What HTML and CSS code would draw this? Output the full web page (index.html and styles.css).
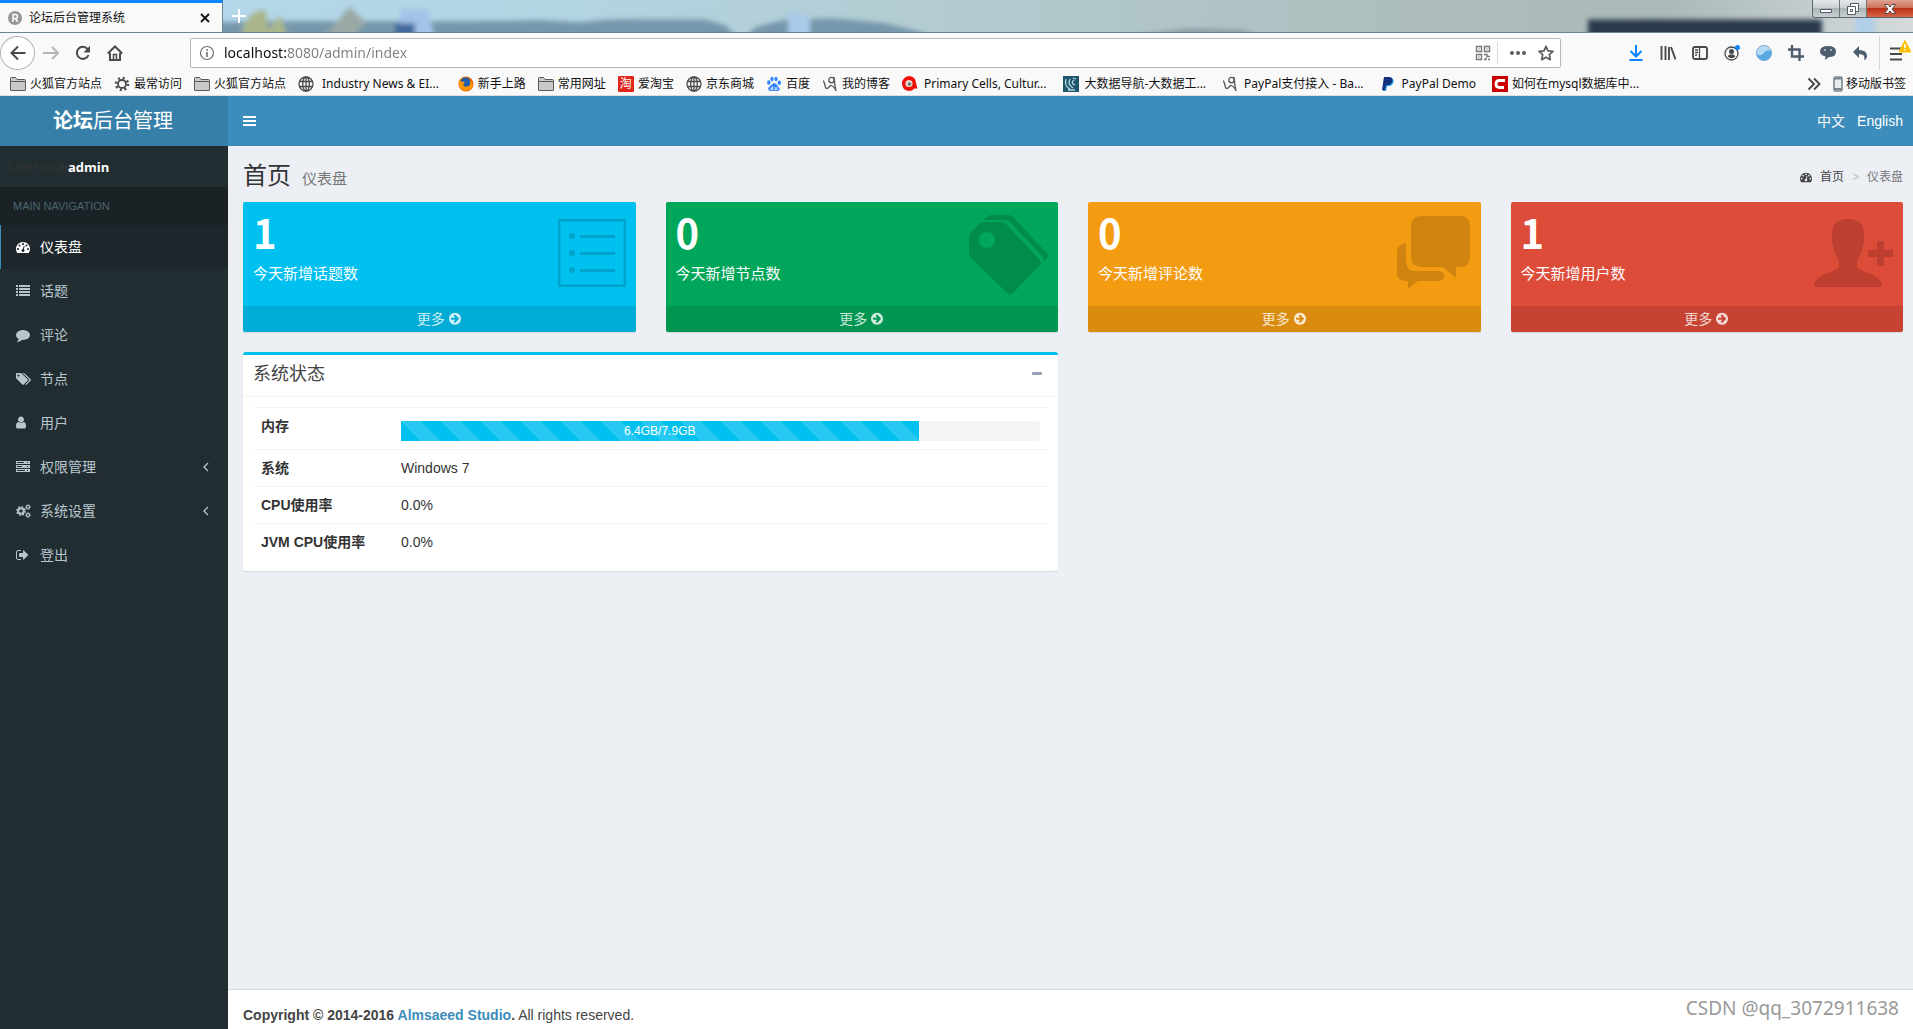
FILE: index.html
```html
<!DOCTYPE html>
<html lang="zh-CN">
<head>
<meta charset="utf-8">
<title>论坛后台管理系统</title>
<link rel="stylesheet" href="styles.css">
</head>
<body>
<svg class="sprite" aria-hidden="true">
  <symbol id="dashboard" viewBox="0 0 1792 1792"><path d="M384 1152q0-53-37.5-90.5t-90.5-37.5-90.5 37.5-37.5 90.5 37.5 90.5 90.5 37.5 90.5-37.5 37.5-90.5zm192-448q0-53-37.5-90.5t-90.5-37.5-90.5 37.5-37.5 90.5 37.5 90.5 90.5 37.5 90.5-37.5 37.5-90.5zm428 481l101-382q6-26-7.5-48.5t-38.5-29.5-48 6.5-30 39.5l-101 382q-60 5-107 43.5t-63 98.5q-20 77 20 146t117 89 146-20 89-117q16-60-6-117t-72-91zm660-33q0-53-37.5-90.5t-90.5-37.5-90.5 37.5-37.5 90.5 37.5 90.5 90.5 37.5 90.5-37.5 37.5-90.5zm-640-640q0-53-37.5-90.5t-90.5-37.5-90.5 37.5-37.5 90.5 37.5 90.5 90.5 37.5 90.5-37.5 37.5-90.5zm448 192q0-53-37.5-90.5t-90.5-37.5-90.5 37.5-37.5 90.5 37.5 90.5 90.5 37.5 90.5-37.5 37.5-90.5zm320 448q0 261-141 483-19 29-54 29h-1402q-35 0-54-29-141-221-141-483 0-182 71-348t191-286 286-191 348-71 348 71 286 191 191 286 71 348z"/></symbol>
  <symbol id="more" viewBox="0 0 1792 1792"><path d="M1413 896q0-27-18-45l-91-91-362-362q-18-18-45-18t-45 18l-91 91q-18 18-18 45t18 45l189 189h-502q-26 0-45 19t-19 45v128q0 26 19 45t45 19h502l-189 189q-19 19-19 45t19 45l91 91q18 18 45 18t45-18l362-362 91-91q18-18 18-45zm251 0q0 209-103 385.5t-279.5 279.5-385.5 103-385.5-103-279.5-279.5-103-385.5 103-385.5 279.5-279.5 385.5-103 385.5 103 279.5 279.5 103 385.5z" transform="translate(0 -34)" fill-rule="evenodd"/></symbol>
  <symbol id="folder" viewBox="0 0 16 16"><path d="M.5 14V2.500q0-1 1-1h4l1.500 2h7.500q1 0 1 1V14q0 .5-.5.5H1q-.5 0-.5-.5z" fill="#c9c9cb" stroke="#5a5a5c"/><path d="M1 5.500h14" stroke="#5a5a5c"/></symbol>
  <symbol id="globe" viewBox="0 0 16 16"><g fill="none" stroke="#4a4a4c" stroke-width="1.300"><circle cx="8" cy="8" r="7"/><ellipse cx="8" cy="8" rx="3.300" ry="7"/><path d="M1.500 5.500h13M1.500 10.500h13M8 1v14"/></g></symbol>
  <symbol id="blog" viewBox="0 0 16 16"><g fill="none" stroke="#555" stroke-width="1.300"><path d="M1 5q1 0 2 4.500t3 2.500 3-3"/><circle cx="9.500" cy="4" r="2.700"/><path d="M12 1q.5 7 2 14-1-4-5-5.500"/></g></symbol>
  <symbol id="angle" viewBox="0 0 8 12"><path d="M6 2L2 6l4 4" fill="none" stroke="currentColor" stroke-width="1.300"/></symbol>
</svg>

<header class="browser">
  <div class="titlebar">
    <svg class="wallpaper" viewBox="0 0 1913 33" preserveAspectRatio="none" aria-hidden="true">
      <defs>
        <linearGradient id="sky" x2="1"><stop offset="0" stop-color="#b4d8ef"/><stop offset=".3" stop-color="#b3d4e2"/><stop offset=".5" stop-color="#b3cbd0"/><stop offset=".7" stop-color="#aebfbf"/><stop offset=".87" stop-color="#abb9b8"/><stop offset="1" stop-color="#d4dadd"/></linearGradient>
        <filter id="soft" x="-10%" y="-100%" width="120%" height="300%"><feGaussianBlur stdDeviation="2.500"/></filter>
      </defs>
      <path fill="url(#sky)" d="M0 0h1913v33H0z"/>
      <g filter="url(#soft)">
        <path fill="#7696ab" d="M180 24l80-2h200l80-1 40 2 30-3 50 0h45l20 6 15 14H180zM745 40l10-12 30-8 50-1 50 5 40 10v6z"/>
        <path fill="#8298a2" d="M1130 36l60-6 50 1 20 5z"/>
        <path fill="#a9b68c" d="M242 30q10-22 24-19l2 19 12-14 9 24h-47z"/>
        <path fill="#9aa9a5" d="M324 38l26-31 15 16-12 15z"/>
        <path fill="#a5c3e8" d="M400 9h27l8 30h-36z"/><path fill="#42699f" d="M395 24h20v14h-20z"/>
        <path fill="#a9cae9" d="M788 12l22 5v24h-22z"/>
        <path fill="#2b3a4e" d="M1588 20h234v24h-234z"/>
        <path fill="#b2cfe8" d="M1855 10h20v33h-20z"/>
      </g>
    </svg>
    <div class="tab">
      <svg class="i16" viewBox="0 0 16 16" aria-hidden="true"><circle cx="8" cy="8" r="7" fill="#969696"/><path d="M6 12V4.500h2.500q2 0 2 2t-2 2H6m2.500 0l2.300 3.500" fill="none" stroke="#fff" stroke-width="1.500"/></svg>
      <span class="tab-title">论坛后台管理系统</span>
      <button class="plain" aria-label="关闭标签页"><svg class="i12" viewBox="0 0 12 12"><path d="M2 2l8 8M10 2l-8 8" stroke="#111" stroke-width="1.800"/></svg></button>
    </div>
    <button class="plain new-tab" aria-label="新标签页"><svg class="i16" viewBox="0 0 16 16"><path d="M8 1v14M1 8h14" stroke="#fff" stroke-width="2"/></svg></button>
    <div class="win-buttons">
      <button aria-label="最小化"><svg width="14" height="12" viewBox="0 0 14 12"><path d="M1.500 6.500h11v3h-11z" fill="#fff" stroke="#555a6b"/></svg></button>
      <button aria-label="还原"><svg width="14" height="14" viewBox="0 0 14 14"><g fill="#fff" stroke="#555a6b"><path d="M4.500 1.500h8v8h-8z"/><path d="M1.500 4.500h8v8h-8z"/><path d="M4.500 7.500h2v2h-2z"/></g></svg></button>
      <button class="close" aria-label="关闭"><svg width="14" height="12" viewBox="0 0 14 12"><path d="M1.500 1.500h3.500l2 2.500 2-2.500h3.500L9 6l3.500 4.500H9L7 8l-2 2.500H1.500L5 6z" fill="#fff" stroke="#5e4a54"/></svg></button>
    </div>
  </div>

  <div class="toolbar">
    <button class="back" aria-label="后退"><svg class="i16" viewBox="0 0 16 16"><path d="M15.500 8H1.500M8 1.500L1.500 8 8 14.500" fill="none" stroke="#4a4a4c" stroke-width="2"/></svg></button>
    <button class="plain tool" aria-label="前进"><svg class="i16" viewBox="0 0 16 16"><path d="M0 8h15M9 2l6 6-6 6" fill="none" stroke="#b5b5b7" stroke-width="2"/></svg></button>
    <button class="plain tool" aria-label="刷新"><svg class="i16" viewBox="0 0 16 16"><path d="M13.500 10A6 6 0 1 1 12.500 4" fill="none" stroke="#4a4a4c" stroke-width="2"/><path d="M15 .8v6.700H8.500z" fill="#4a4a4c"/></svg></button>
    <button class="plain tool" aria-label="主页"><svg class="i16" viewBox="0 0 16 16"><path d="M.8 8.500L8 1.500l7.200 7M3 8v7h10V8" fill="none" stroke="#4a4a4c" stroke-width="2"/><path d="M6.500 14V9.500h3V14" fill="none" stroke="#4a4a4c" stroke-width="1.500"/></svg></button>
    <div class="urlbar">
      <svg class="i16" viewBox="0 0 16 16" aria-hidden="true"><circle cx="8" cy="8" r="6.500" fill="none" stroke="#6d6d70" stroke-width="1.200"/><path d="M8 7v5M8 4v1.800" stroke="#6d6d70" stroke-width="1.600"/></svg>
      <input class="address" type="text" aria-label="地址" value="localhost:8080/admin/index">
      <svg class="i16" viewBox="0 0 16 16" aria-hidden="true"><g fill="none" stroke="#77777a" stroke-width="1.400"><path d="M1.500 1.500h5v5h-5zM9.500 1.500h5v5h-5zM1.500 9.500h5v5h-5z"/><path d="M9 9.500h3v2h3M9 14.500h2v-2M13 14.500h2M3.500 4h1M11.500 4h1M3.500 12h1"/></g></svg>
      <i class="rule"></i>
      <svg class="i16" viewBox="0 0 16 16" aria-hidden="true"><g fill="#5a5a5c"><circle cx="2" cy="8" r="2"/><circle cx="8" cy="8" r="2"/><circle cx="14" cy="8" r="2"/></g></svg>
      <svg class="i16 star" viewBox="0 0 16 16" aria-hidden="true"><path d="M8 1.300l2 4.500 5 .5-3.700 3.400 1 5L8 12.200l-4.300 2.500 1-5L1 6.300l5-.5z" fill="none" stroke="#5a5a5c" stroke-width="1.700" stroke-linejoin="round"/></svg>
    </div>
    <div class="tools">
      <button class="plain tool" aria-label="下载"><svg class="i16" viewBox="0 0 16 16"><path d="M8 0v11M2.500 6L8 11.500 13.500 6M1.500 15h13" fill="none" stroke="#0a84ff" stroke-width="2"/></svg></button>
      <button class="plain tool" aria-label="书签库"><svg class="i16" viewBox="0 0 16 16"><path d="M1.500 1v14M5.500 1v14M9 2v13M11 2l4.500 12.500" stroke="#4a4a4c" stroke-width="1.900"/></svg></button>
      <button class="plain tool" aria-label="侧栏"><svg class="i16" viewBox="0 0 16 16"><rect x="1" y="2" width="14" height="12" rx="2" fill="none" stroke="#4a4a4c" stroke-width="1.900"/><path d="M7.500 2v12M3 5h3M3 7.500h3M3 10h2" stroke="#4a4a4c" stroke-width="1.300"/></svg></button>
      <button class="plain tool" aria-label="账户"><svg class="i16" viewBox="0 0 16 16"><circle cx="7.500" cy="8.500" r="6.500" fill="none" stroke="#4a4a4c" stroke-width="1.300"/><circle cx="7.500" cy="6.500" r="2.500" fill="#4a4a4c"/><path d="M3.500 11.500q1-2.200 4-2.200t4 2.200q-4 3.500-8 0z" fill="#4a4a4c"/><circle cx="13.500" cy="2.500" r="2.500" fill="#0a84ff"/></svg></button>
      <button class="plain tool" aria-label="扩展"><svg class="i16" viewBox="0 0 16 16"><circle cx="8" cy="8" r="7.600" fill="#b4daf5" stroke="#6c9ccc" stroke-width=".8"/><path d="M.8 9q4 3 7-1t7-2q2 8-6 9.500Q2 15 .8 9z" fill="#5aa8e0"/></svg></button>
      <button class="plain tool" aria-label="截图"><svg class="i16" viewBox="0 0 16 16"><path d="M4 0v11.500h12M0 4.500h11.500V16" fill="none" stroke="#4f5e6c" stroke-width="2.400"/></svg></button>
      <button class="plain tool" aria-label="聊天"><svg class="i16" viewBox="0 0 16 16"><path d="M8 1q8 0 8 5.500T9 12l-4 3 .5-3.500Q0 10 0 6.500 0 1 8 1z" fill="#4f5e6c"/><circle cx="5" cy="5" r="1.100" fill="#b9c2ca"/><circle cx="11" cy="5" r="1.100" fill="#b9c2ca"/></svg></button>
      <button class="plain tool" aria-label="撤销"><svg class="i16" viewBox="0 0 16 16"><path d="M7 1v4q8 0 8 6 0 3-3 4 2-6-5-6v4L1 7z" fill="#4f5e6c"/></svg></button>
      <i class="rule tall"></i>
      <button class="plain menu" aria-label="菜单"><svg width="26" height="28" viewBox="0 0 26 28"><path d="M5 9.500h12M5 15h12M5 20.500h12" stroke="#4a4a4c" stroke-width="2.200"/><path d="M20 1.500L26 13H14z" fill="#ffbf00" stroke="#ffbf00" stroke-linejoin="round"/><path d="M20 5v4M20 10v1.500" stroke="#fff" stroke-width="1.600"/></svg></button>
    </div>
  </div>

  <nav class="bookmarks" aria-label="书签">
    <a href="#"><svg class="i16"><use href="#folder"/></svg>火狐官方站点</a>
    <a href="#"><svg class="i16" viewBox="0 0 16 16"><circle cx="8" cy="8" r="4" fill="none" stroke="#4a4a4c" stroke-width="1.800"/><circle cx="8" cy="8" r="6" fill="none" stroke="#4a4a4c" stroke-width="2.500" stroke-dasharray="2 2.710"/></svg>最常访问</a>
    <a href="#"><svg class="i16"><use href="#folder"/></svg>火狐官方站点</a>
    <a href="#" class="page wide"><svg class="i16"><use href="#globe"/></svg>Industry News &amp; EI...</a>
    <a href="#"><svg class="i16" viewBox="0 0 16 16"><circle cx="8" cy="8" r="7.500" fill="#e66000"/><circle cx="7.500" cy="6.500" r="5" fill="#1f5fae"/><path d="M1 4l2 1.500 4 .5-2 3q2 3 6 1 2-2 1-6 5 5 1 9-6 4-11-1-2-4-1-8z" fill="#ff9500"/></svg>新手上路</a>
    <a href="#"><svg class="i16"><use href="#folder"/></svg>常用网址</a>
    <a href="#"><span class="badge">淘</span>爱淘宝</a>
    <a href="#"><svg class="i16"><use href="#globe"/></svg>京东商城</a>
    <a href="#"><svg class="i16" viewBox="0 0 16 16"><g fill="#3385ff"><ellipse cx="2.800" cy="6.500" rx="1.700" ry="2.200"/><ellipse cx="6" cy="3" rx="1.600" ry="2.300"/><ellipse cx="10" cy="3" rx="1.600" ry="2.300"/><ellipse cx="13.300" cy="6.800" rx="1.700" ry="2.200"/><path d="M8 7q2 0 3.500 2.500T14 13q-1 2.500-3.500 2t-5 0Q3 15.500 2 13q0-1.500 2.500-3.500T8 7z"/></g><path d="M6.500 10.500v3H5v-1.500h1.500M9 11v2.500h2V11" fill="none" stroke="#fff" stroke-width=".8"/></svg>百度</a>
    <a href="#"><svg class="i16"><use href="#blog"/></svg>我的博客</a>
    <a href="#" class="page"><svg class="i16" viewBox="0 0 16 16"><path d="M7.500 0Q14 1 14 7l1.500 5.500-3 0Q10 15 7 15 0 14 0 7.500T7.500 0z" fill="#f0100a"/><circle cx="7" cy="7.500" r="3.600" fill="#ecd9d4"/><circle cx="7.500" cy="8" r="1.800" fill="#5c7d74"/></svg>Primary Cells, Cultur...</a>
    <a href="#" class="page"><svg class="i16" viewBox="0 0 16 16"><path d="M0 0h16v16H0z" fill="#20576f"/><path d="M3 3q-2 7 4 10M7 3q-3 5 3 9M11 4q-4 3 1 5M5 14h7M10 2l3 1" stroke="#b5d5de" stroke-width="1.300" fill="none"/></svg>大数据导航-大数据工...</a>
    <a href="#" class="page"><svg class="i16"><use href="#blog"/></svg>PayPal支付接入 - Ba...</a>
    <a href="#" class="page"><svg class="i16" viewBox="0 0 16 16"><path d="M4 2h6q4 0 3.500 4-1 4-5 4H7l-1 5H3z" fill="#1a9ce0"/><path d="M4 1h5q4 0 3.500 4-1 4-5 4H6l-1 5H2z" fill="#12307c"/></svg>PayPal Demo</a>
    <a href="#"><svg class="i16" viewBox="0 0 16 16"><path d="M0 0h16v16H0z" fill="#c00"/><path d="M13 4.500H7.500Q4 4.500 4 8t3.500 3.500H12" fill="none" stroke="#fff" stroke-width="2.800"/></svg>如何在mysql数据库中...</a>
    <span class="spring"></span>
    <button class="plain" aria-label="更多书签"><svg width="14" height="14" viewBox="0 0 14 14"><path d="M1.500 1.500L7 7l-5.500 5.500M7 1.500L12.500 7 7 12.500" fill="none" stroke="#4a4a4c" stroke-width="1.900"/></svg></button>
    <a href="#" class="mobile"><svg width="10" height="16" viewBox="0 0 10 16"><rect x="1" y="1" width="8" height="14" rx="1.500" fill="#e8ecee" stroke="#7d868c" stroke-width="1.600"/><path d="M1 2.500h8M1 13h8" stroke="#7d868c" stroke-width="2"/></svg>移动版书签</a>
  </nav>
</header>

<div class="app">
  <aside class="sidebar">
    <a href="#" class="logo"><b>论坛</b>后台管理</a>
    <div class="user"><span class="photo">User Imag</span><strong>admin</strong></div>
    <div class="nav-title">MAIN NAVIGATION</div>
    <nav>
      <a href="#" class="active"><svg class="i14"><use href="#dashboard"/></svg><span>仪表盘</span></a>
      <a href="#"><svg class="i14" viewBox="0 0 14 14"><path d="M0 1h2v2H0zM3 1h11v2H3zM0 4h2v2H0zM3 4h11v2H3zM0 7h2v2H0zM3 7h11v2H3zM0 10h2v2H0zM3 10h11v2H3z"/></svg><span>话题</span></a>
      <a href="#"><svg class="i14" viewBox="0 0 1792 1792"><path d="M1792 896q0 174-120 321.500t-326 233-450 85.500q-70 0-145-8-198 175-460 242-49 14-114 22h-5q-15 0-27-10.500t-16-27.500v-1q-3-4-.5-12t2-10 4.500-9.500l6-9 7-8.500 8-9q7-8 31-34.500t34.500-38 31-39.500 32.500-51 27-59 26-76q-157-89-247.500-220t-90.500-281q0-174 120-321.500t326-233 450-85.500 450 85.500 326 233 120 321.500z"/></svg><span>评论</span></a>
      <a href="#"><svg width="15" height="14" viewBox="0 0 1920 1792"><path d="M448 448q0-53-37.500-90.500t-90.500-37.500-90.500 37.500-37.500 90.500 37.500 90.500 90.500 37.500 90.500-37.500 37.500-90.500zm1067 576q0 53-37 90l-491 492q-39 37-91 37-53 0-90-37l-715-716q-38-37-64.500-101t-26.500-117v-416q0-52 38-90t90-38h416q53 0 117 26.500t102 64.500l715 714q37 39 37 91zm384 0q0 53-37 90l-491 492q-39 37-91 37-36 0-59-14t-53-45l470-470q37-37 37-90 0-52-37-91l-715-714q-38-38-102-64.500t-117-26.500h224q53 0 117 26.500t102 64.500l715 714q37 39 37 91z"/></svg><span>节点</span></a>
      <a href="#"><svg class="i14" viewBox="256 64 1792 1792"><path d="M1536 1399q0 109-62.500 187t-150.500 78h-854q-88 0-150.500-78t-62.500-187q0-85 8.500-160.500t31.500-152 58.500-131 94-89 134.500-34.500q131 128 313 128t313-128q76 0 134.500 34.500t94 89 58.500 131 31.500 152 8.500 160.500zm-256-887q0 159-112.500 271.500t-271.500 112.500-271.500-112.500-112.500-271.500 112.500-271.500 271.500-112.500 271.500 112.500 112.500 271.500z"/></svg><span>用户</span></a>
      <a href="#"><svg class="i14" viewBox="0 0 14 14"><path fill-rule="evenodd" d="M0 1h14v3H0zM1 2v1h7V2zM11 2v1h1V2zM0 5h14v3H0zM1 6v1h5V6zM11 6v1h1V6zM0 9h14v3H0zM1 10v1h8v-1zM11 10v1h1v-1z"/></svg><span>权限管理</span><svg class="arrow"><use href="#angle"/></svg></a>
      <a href="#"><svg width="15" height="14" viewBox="0 0 15 14"><g fill="none" stroke="currentColor"><circle cx="5" cy="7" r="2.800" stroke-width="2"/><circle cx="5" cy="7" r="4.200" stroke-width="1.500" stroke-dasharray="1.700 1.600"/><circle cx="12" cy="3" r="1.500" stroke-width="1.200"/><circle cx="12" cy="3" r="2.400" stroke-dasharray="1 .9"/><circle cx="12" cy="11" r="1.500" stroke-width="1.200"/><circle cx="12" cy="11" r="2.400" stroke-dasharray="1 .9"/></g></svg><span>系统设置</span><svg class="arrow"><use href="#angle"/></svg></a>
      <a href="#"><svg class="i14" viewBox="64 0 1792 1792"><path d="M704 1440q0 4 1 20t.5 26.500-3 23.500-10 19.500-20.500 6.500h-320q-119 0-203.500-84.500t-84.500-203.500v-704q0-119 84.500-203.500t203.500-84.500h320q13 0 22.500 9.500t9.500 22.500q0 4 1 20t.5 26.500-3 23.500-10 19.500-20.500 6.500h-320q-66 0-113 47t-47 113v704q0 66 47 113t113 47h312l11.500 1 11.500 3 8 5.500 7 9 2 13.500zm928-544q0 26-19 45l-544 544q-19 19-45 19t-45-19-19-45v-288h-448q-26 0-45-19t-19-45v-384q0-26 19-45t45-19h448v-288q0-26 19-45t45-19 45 19l544 544q19 19 19 45z"/></svg><span>登出</span></a>
    </nav>
  </aside>

  <div class="main">
    <header class="navbar">
      <button class="plain" aria-label="切换导航"><svg width="14" height="12" viewBox="0 0 14 12"><path d="M0 1h13v2H0zM0 5h13v2H0zM0 9h13v2H0z" fill="#fff"/></svg></button>
      <div class="langs"><a href="#">中文</a><a href="#">English</a></div>
    </header>

    <main class="content">
      <div class="page-head">
        <h1>首页<small>仪表盘</small></h1>
        <div class="crumbs"><svg class="i12"><use href="#dashboard"/></svg><a href="#">首页</a><i>&gt;</i><span>仪表盘</span></div>
      </div>

      <section class="cards">
        <article class="card aqua">
          <div class="card-body"><div><h3>1</h3><p>今天新增话题数</p></div>
            <svg class="art" viewBox="0 0 80 80"><path d="M12 4h68v68H12zM14.500 6.500v63h63v-63z" fill-rule="evenodd"/><g><circle cx="26" cy="21" r="3"/><circle cx="26" cy="38" r="3"/><circle cx="26" cy="55" r="3"/><path d="M34 20h35v3H34zM34 37h35v3H34zM34 54h35v3H34z"/></g></svg></div>
          <a href="#" class="card-foot">更多 <svg class="i14"><use href="#more"/></svg></a>
        </article>
        <article class="card green">
          <div class="card-body"><div><h3>0</h3><p>今天新增节点数</p></div>
            <svg class="art" viewBox="0 0 80 80"><path fill-rule="evenodd" d="M2 18L11 9q2-2 5-2h17q3 0 5 2l34 36q2 3 0 5L45 78q-3 3-6 0L3 43q-2-2-2-5V22q0-2 1-4zM11 25a8 8 0 1 0 16 0 8 8 0 1 0-16 0z"/><path d="M15 5l4-3q2-2 5-2h16q3 0 5 2l34 36q2 3 0 5l-4 4q1-3-1-6L42 7q-2-2-5-2z"/></svg></div>
          <a href="#" class="card-foot">更多 <svg class="i14"><use href="#more"/></svg></a>
        </article>
        <article class="card yellow">
          <div class="card-body"><div><h3>0</h3><p>今天新增评论数</p></div>
            <svg class="art" viewBox="0 0 80 80"><path d="M31 1h38q10 0 10 11v29q0 11-10 11h-4v11L52 52H31q-11 0-11-11V12Q20 1 31 1z"/><path d="M15 28v18q0 10 10 10h24l5 4q-1 6-7 6H27l-10 8v-8h-2q-9 0-9-8V37q0-8 9-9z"/></svg></div>
          <a href="#" class="card-foot">更多 <svg class="i14"><use href="#more"/></svg></a>
        </article>
        <article class="card red">
          <div class="card-body"><div><h3>1</h3><p>今天新增用户数</p></div>
            <svg class="art" viewBox="0 0 80 80"><path d="M35 4q16 0 16 15 0 3-.5 4 1 4-.5 7-1 9-6 15v7q2 3 12 6.500 13 4 13 13.500H1q0-9.500 13-13.500 10-3.500 12-6.500v-7q-5-6-6-15-1.500-3-.5-7-.5-1-.5-4Q19 4 35 4z"/><path d="M64 26h7v9h9v7h-9v9h-7v-9h-9v-7h9z"/></svg></div>
          <a href="#" class="card-foot">更多 <svg class="i14"><use href="#more"/></svg></a>
        </article>
      </section>

      <section class="box">
        <div class="box-head"><h3>系统状态</h3><button class="plain" aria-label="折叠"><svg width="10" height="4" viewBox="0 0 10 4"><rect width="10" height="3" rx="1" fill="#97a0b3"/></svg></button></div>
        <div class="box-body">
          <table>
            <tr><th scope="row">内存</th><td><div class="progress"><div class="bar" style="width:81%">6.4GB/7.9GB</div></div></td></tr>
            <tr><th scope="row">系统</th><td>Windows 7</td></tr>
            <tr><th scope="row">CPU使用率</th><td>0.0%</td></tr>
            <tr><th scope="row">JVM CPU使用率</th><td>0.0%</td></tr>
          </table>
        </div>
      </section>
    </main>

    <footer class="footer"><strong>Copyright © 2014-2016 <a href="#">Almsaeed Studio</a>.</strong> All rights reserved.</footer>
  </div>
</div>
<div class="watermark">CSDN @qq_3072911638</div>
</body>
</html>
```
FILE: styles.css
```css
* { box-sizing: border-box; }
body {
  margin: 0;
  min-height: 100vh;
  position: relative;
  display: flex;
  flex-direction: column;
  font: 14px/20px "Liberation Sans", "Noto Sans CJK SC", sans-serif;
  color: #333;
}
a { color: inherit; text-decoration: none; }
svg { flex: none; display: block; fill: currentColor; }
h1, h3, p { margin: 0; }
.sprite { position: absolute; width: 0; height: 0; }
.i12 { width: 12px; height: 12px; }
.i14 { width: 14px; height: 14px; }
.i16 { width: 16px; height: 16px; }
.plain { border: 0; padding: 0; background: none; display: flex; align-items: center; justify-content: center; }

/* Browser window */
.browser { background: #f9f9fa; font: 12px/16px "Noto Sans", "Noto Sans CJK SC", sans-serif; color: #111; }
.titlebar { position: relative; display: flex; height: 33px; border-bottom: 1px solid #6f8290; overflow: hidden; }
.wallpaper { position: absolute; inset: 0; width: 100%; height: 100%; }
.tab {
  position: relative;
  width: 223px;
  height: 33px;
  padding: 0 11px 0 7px;
  display: flex;
  align-items: center;
  gap: 6px;
  background: #f9f9fa;
  border-top: 3px solid #0a84ff;
  border-right: 1px solid #6f8290;
}
.tab-title { flex: 1; }
.new-tab { position: relative; width: 32px; }
.win-buttons { position: relative; display: flex; height: 18px; margin-left: auto; border: 1px solid #5d646b; border-width: 0 0 1px 1px; border-radius: 0 0 0 4px; overflow: hidden; }
.win-buttons button { width: 27px; padding: 0; border: 0; border-right: 1px solid #6d747b; background: linear-gradient(#e4e8e9, #c8cfd0 50%, #aab3b5 50%, #c9d0d1); display: flex; align-items: center; justify-content: center; }
.win-buttons .close { width: 46px; border-right: 0; background: linear-gradient(#dfa393, #cf6a52 50%, #b93318 50%, #d9644a); }
.toolbar { display: flex; align-items: center; height: 40px; }
.back { width: 35px; height: 34px; padding: 0; border: 1px solid #b4b4b6; border-radius: 50%; background: #fff; display: flex; align-items: center; justify-content: center; }
.tool { width: 32px; height: 32px; }
.urlbar { flex: 1; display: flex; align-items: center; height: 30px; margin-left: 59px; padding: 0 6px 0 8px; background: #fff; border: 1px solid #b8b8ba; border-radius: 2px; }
/* The host is dark and the rest of the address grey */
.address {
  flex: 1;
  min-width: 0;
  margin-left: 9px;
  padding: 0;
  border: 0;
  font: 14px/20px "Noto Sans", sans-serif;
  color: transparent;
  caret-color: #0c0c0d;
  background: linear-gradient(90deg, #0c0c0d 63px, #808083 63px);
  -webkit-background-clip: text;
  background-clip: text;
}
.rule { width: 1px; height: 22px; margin: 0 12px 0 6px; background: #d7d7db; }
.star { margin-left: 12px; }
.tools { display: flex; align-items: center; margin-left: 59px; }
.rule.tall { height: 34px; margin: 0 3px; }
.menu { width: 30px; height: 32px; }
.bookmarks { display: flex; align-items: center; gap: 12px; height: 23px; padding: 0 7px 1px 10px; border-bottom: 1px solid #dedee0; white-space: nowrap; }
.bookmarks a { display: flex; align-items: center; gap: 4px; }
.bookmarks .page { gap: 6px; margin-right: 4px; }
.bookmarks .wide { gap: 8px; margin-right: 7px; }
.bookmarks .mobile { gap: 3px; }
.badge { width: 16px; height: 16px; background: #e1251b; color: #fff; text-align: center; line-height: 15px; border-radius: 1px; }
.spring { flex: 1; }

/* Admin layout */
.app { flex: 1; display: flex; }
.sidebar { width: 228px; background: #222d32; color: #b8c7ce; }
.logo { display: flex; align-items: center; justify-content: center; height: 50px; padding-right: 2px; background: #367fa9; color: #fff; font-size: 20px; }
.user { display: flex; align-items: center; height: 41px; padding-left: 8px; }
.user strong { color: #fff; font-family: "Open Sans", sans-serif; font-size: 13px; }
.photo { width: 60px; color: #333; white-space: nowrap; }
.nav-title { height: 38px; padding: 9px 13px; background: #1a2226; color: #4b646f; font-size: 11px; }
.sidebar nav a { display: flex; align-items: center; height: 44px; padding: 0 18px 0 15px; border-left: 1px solid transparent; }
.sidebar nav .active { background: #1e282c; border-color: #3c8dbc; color: #fff; }
.sidebar nav span { flex: 1; }
.sidebar nav svg:first-child { margin-right: 10px; }
.sidebar nav svg[width="15"] { margin-right: 9px; }
.arrow { width: 8px; height: 12px; }
.main { flex: 1; min-width: 0; display: flex; flex-direction: column; background: #ecf0f5; }
.navbar { display: flex; align-items: center; justify-content: space-between; height: 50px; padding: 0 10px 0 15px; background: #3c8dbc; color: #fff; }
.langs { display: flex; gap: 12px; }
.content { flex: 1; padding: 0 10px 0 15px; }
.page-head { display: flex; justify-content: space-between; height: 56px; padding-top: 14px; }
h1 { font-size: 24px; line-height: 32px; font-weight: 400; }
h1 small { margin-left: 11px; font-size: 15px; color: #777; }
.crumbs { display: flex; align-items: center; height: 34px; font-size: 12px; color: #777; }
.crumbs svg { color: #444; margin-right: 8px; }
.crumbs a { color: #444; }
.crumbs i { margin: 0 8px; color: #bbb; font-style: normal; }
.cards { display: grid; grid-template-columns: repeat(4, 1fr); gap: 30px; }
.card { color: #fff; border-radius: 2px; box-shadow: 0 1px 1px rgba(0, 0, 0, .1); overflow: hidden; }
.card-body { display: flex; justify-content: space-between; height: 104px; padding: 13px 10px 0; }
.card h3 { font: bold 40px/34px "Noto Sans CJK SC", sans-serif; }
.card p { margin-top: 15px; font-size: 15px; }
.art { width: 80px; height: 80px; fill: rgba(0, 0, 0, .15); }
.card-foot { display: flex; align-items: center; justify-content: center; gap: 3px; height: 26px; background: rgba(0, 0, 0, .1); color: rgba(255, 255, 255, .8); }
.aqua { background: #00c0ef; }
.green { background: #00a65a; }
.yellow { background: #f39c12; }
.red { background: #dd4b39; }
.box { width: calc(50% - 15px); margin-top: 20px; background: #fff; border-top: 3px solid #00c0ef; border-radius: 3px; box-shadow: 0 1px 1px rgba(0, 0, 0, .1); }
.box-head { display: flex; align-items: center; justify-content: space-between; height: 42px; padding: 0 16px 4px 10px; border-bottom: 1px solid #f4f4f4; }
.box-head h3 { font-size: 18px; font-weight: 400; color: #444; }
.box-body { padding: 10px; }
table { width: 100%; border-collapse: collapse; }
th, td { height: 37px; padding: 8px; border-top: 1px solid #f4f4f4; text-align: left; vertical-align: top; }
th { width: 140px; }
.progress { height: 20px; margin-top: 5px; background: #f5f5f5; border-radius: 1px; }
.bar { height: 20px; background: linear-gradient(45deg, rgba(255, 255, 255, .15) 25%, transparent 25%, transparent 50%, rgba(255, 255, 255, .15) 50%, rgba(255, 255, 255, .15) 75%, transparent 75%) 0 0 / 40px 40px #00c0ef; color: #fff; font-size: 12px; text-align: center; }
.footer { height: 40px; padding: 15px 15px 0; background: #fff; border-top: 1px solid #d2d6de; color: #444; }
.footer a { color: #3c8dbc; }
.watermark { position: absolute; right: 14px; bottom: 7px; font: 19px/28px "Noto Sans", sans-serif; color: #999; }
```
